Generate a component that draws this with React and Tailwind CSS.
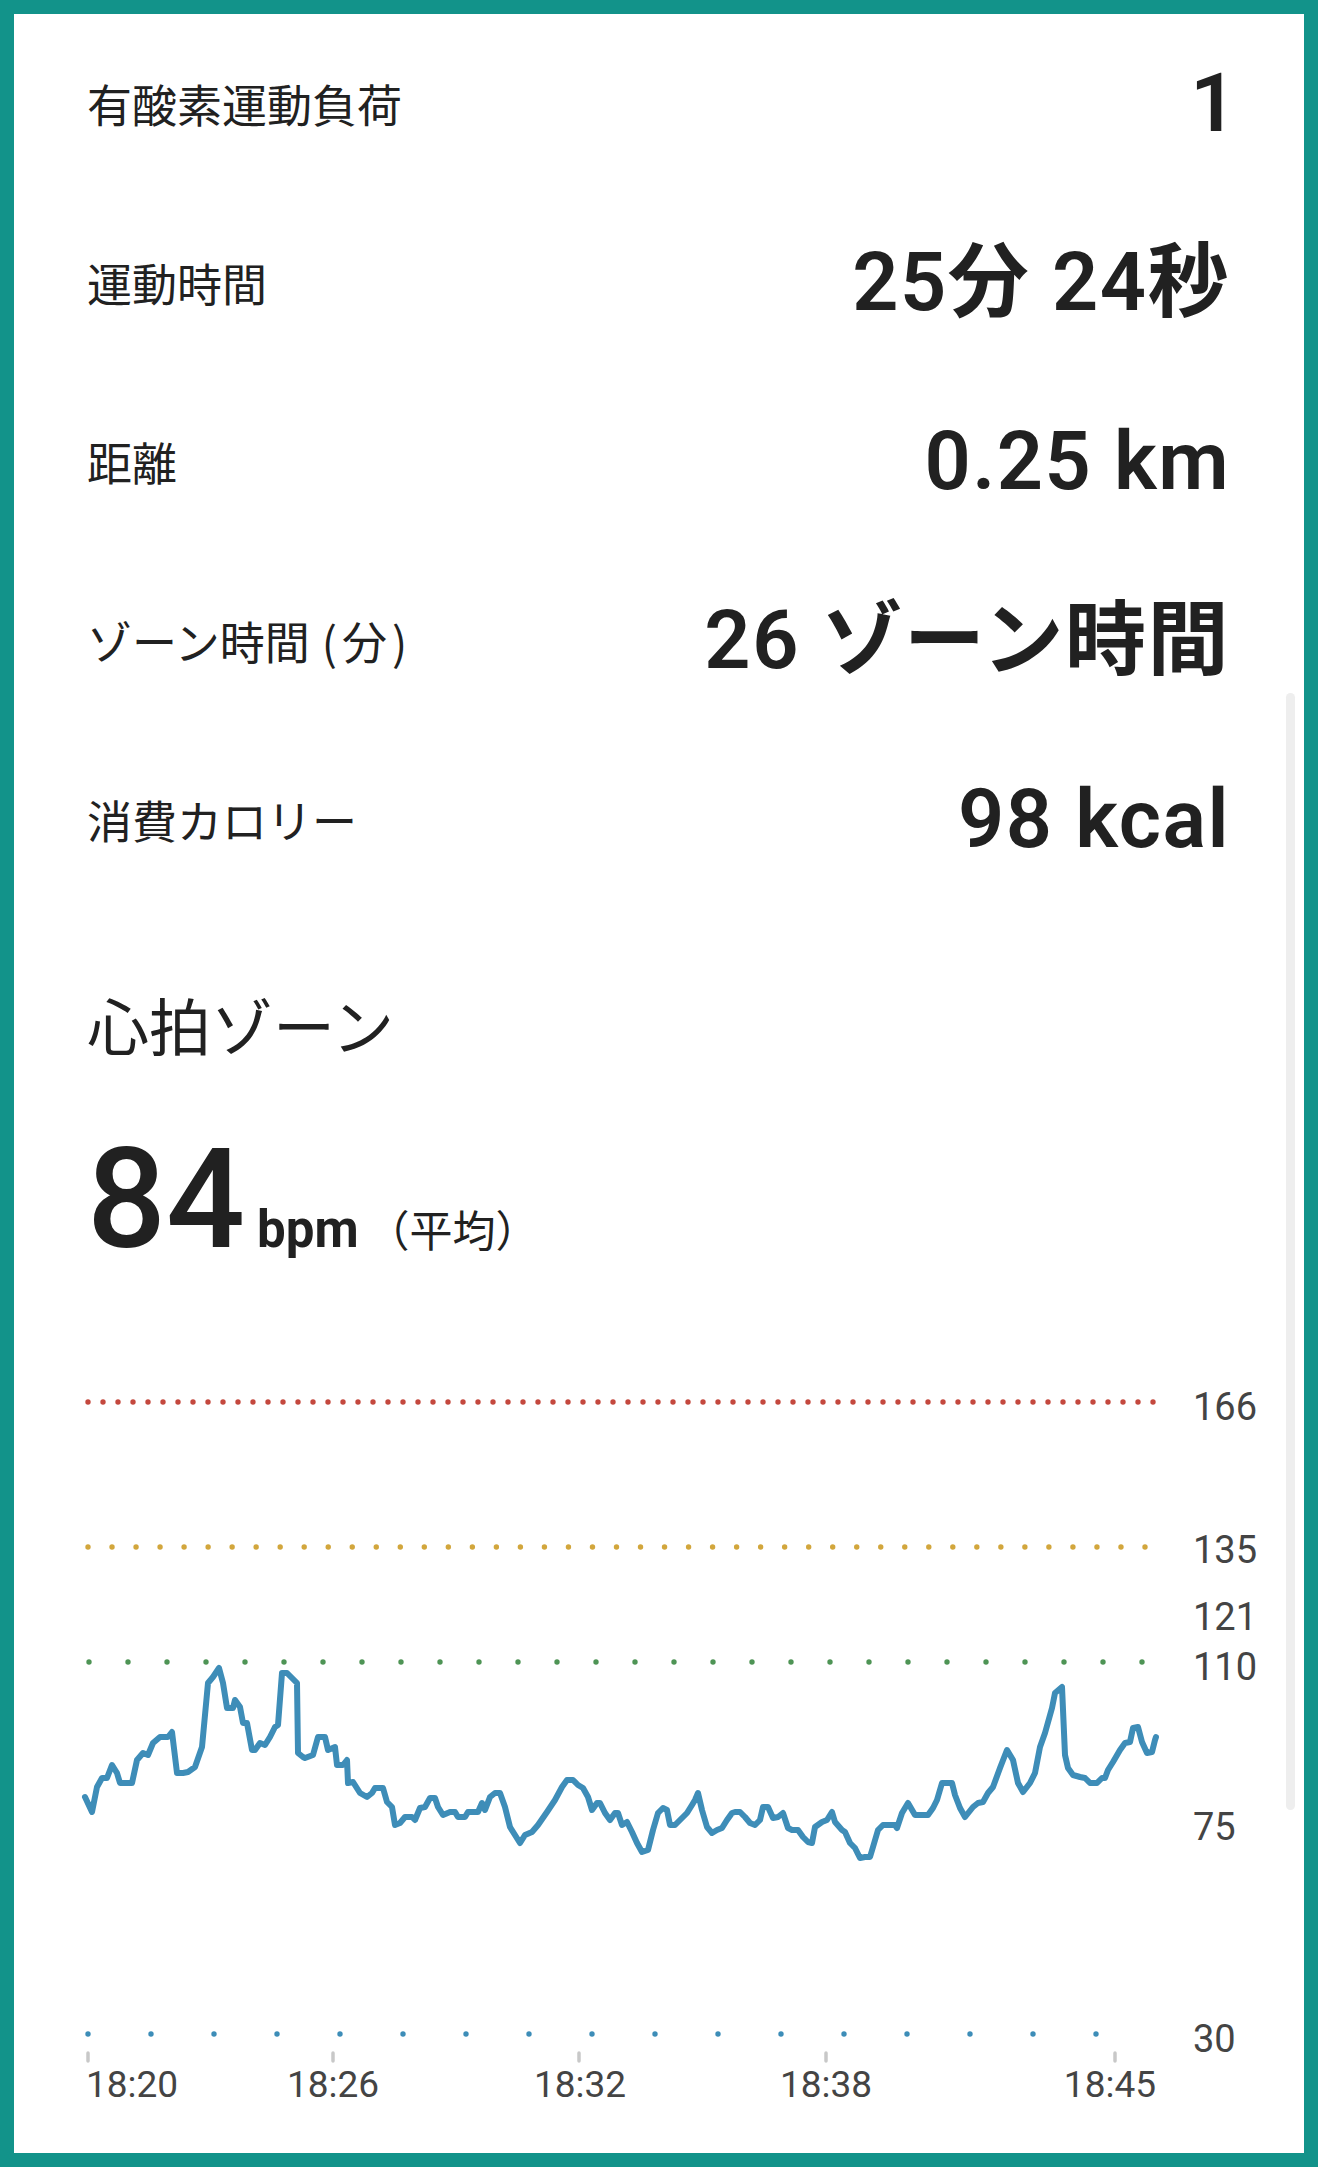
import React from 'react';

const rows = [
  { label: '有酸素運動負荷', value: '1', nudge: 'mr-[-8px]' },
  { label: '運動時間', value: '25分 24秒' },
  { label: '距離', value: '0.25 km' },
  { label: 'ゾーン時間 (分)', value: '26 ゾーン時間' },
  { label: '消費カロリー', value: '98 kcal' },
];

// heart rate trace, page coordinates
const trace = `85,1797 92,1812 97,1787 102,1778 107,1778 112,1765 117,1773 120,1783 132,1783 137,1760 143,1753 148,1755 153,1743 160,1737 168,1737 172,1732 177,1773 183,1773 188,1772 195,1767 202,1747 208,1683 213,1677 219,1668 223,1683 227,1708 233,1708 235,1700 240,1707 243,1723 247,1723 252,1750 255,1750 260,1743 265,1745 270,1737 275,1727 278,1725 282,1673 287,1673 292,1678 297,1683 298,1753 303,1757 305,1758 313,1755 318,1737 325,1737 328,1750 335,1747 337,1765 343,1765 347,1760 348,1783 353,1782 360,1793 367,1797 372,1793 375,1788 383,1788 387,1802 392,1807 395,1825 400,1823 405,1817 412,1817 415,1820 420,1808 425,1807 430,1798 435,1798 438,1807 443,1815 450,1812 455,1812 458,1817 465,1817 468,1812 478,1812 482,1803 485,1810 490,1797 495,1793 500,1793 505,1807 510,1827 515,1835 520,1843 525,1835 532,1832 538,1825 547,1812 555,1800 562,1787 567,1780 573,1780 578,1785 583,1788 588,1797 592,1810 597,1803 600,1803 605,1813 610,1820 615,1813 618,1813 622,1825 627,1822 632,1832 637,1843 642,1852 648,1850 653,1830 658,1813 663,1808 667,1810 670,1825 675,1825 680,1820 687,1813 692,1805 695,1800 698,1793 702,1810 707,1827 712,1833 717,1830 722,1828 727,1820 732,1813 735,1812 740,1812 745,1817 750,1823 755,1825 760,1820 763,1807 768,1807 773,1818 778,1817 783,1813 788,1828 792,1830 798,1830 803,1837 808,1842 812,1843 815,1827 822,1822 827,1820 832,1812 835,1822 842,1830 845,1832 850,1843 855,1848 860,1858 865,1857 870,1857 873,1847 878,1830 883,1825 895,1825 897,1828 902,1813 908,1803 915,1815 928,1815 933,1808 937,1800 942,1783 952,1783 955,1795 960,1808 965,1817 973,1807 978,1803 983,1802 988,1793 993,1787 1000,1768 1007,1750 1013,1760 1018,1783 1023,1792 1030,1783 1035,1773 1040,1747 1045,1733 1052,1708 1055,1693 1062,1687 1065,1755 1068,1768 1073,1775 1080,1777 1085,1778 1090,1783 1097,1783 1102,1778 1105,1778 1108,1770 1113,1762 1120,1750 1125,1743 1130,1742 1133,1728 1138,1727 1142,1742 1147,1753 1152,1752 1155,1740 1156,1737`;

const dots = (from, to, count) =>
  Array.from({ length: count }, (_, i) => from + ((to - from) * i) / (count - 1));

const zones = [
  { y: 1402, xs: dots(88, 1153, 72), color: '#c4483e' },
  { y: 1547, xs: dots(88, 1145, 45), color: '#d2a63c' },
  { y: 1662, xs: dots(89, 1142, 28), color: '#4e9455' },
  { y: 2034, xs: dots(88, 1096, 17), color: '#3d8db8' },
];

const yLabels = [
  { t: '166', y: 1420 },
  { t: '135', y: 1563 },
  { t: '121', y: 1630 },
  { t: '110', y: 1680 },
  { t: '75', y: 1840 },
  { t: '30', y: 2052 },
];

const xLabels = [
  { t: '18:20', x: 86, tick: 88, anchor: 'start' },
  { t: '18:26', x: 333, tick: 333, anchor: 'middle' },
  { t: '18:32', x: 580, tick: 579, anchor: 'middle' },
  { t: '18:38', x: 826, tick: 826, anchor: 'middle' },
  { t: '18:45', x: 1156, tick: 1115, anchor: 'end' },
];

const HeartChart = () => (
  <svg
    width="1290"
    height="773"
    viewBox="14 1380 1290 773"
    className="block mt-auto shrink-0"
    style={{ fontFamily: 'Roboto, "Liberation Sans", sans-serif' }}
  >
    {zones.map((z) =>
      z.xs.map((x, i) => <circle key={`${z.y}-${i}`} cx={x} cy={z.y} r="2.7" fill={z.color} />)
    )}
    <polyline
      points={trace}
      fill="none"
      stroke="#3e8db8"
      strokeWidth="6"
      strokeLinejoin="round"
      strokeLinecap="round"
    />
    {yLabels.map((l) => (
      <text key={l.t} x="1193" y={l.y} fontSize="38" fill="#444444">
        {l.t}
      </text>
    ))}
    {xLabels.map((l) => (
      <g key={l.t}>
        <line x1={l.tick} y1="2053" x2={l.tick} y2="2061" stroke="#c8c8c8" strokeWidth="3.5" strokeLinecap="round" />
        <text x={l.x} y="2097" fontSize="37" fill="#444444" textAnchor={l.anchor}>
          {l.t}
        </text>
      </g>
    ))}
  </svg>
);

const Label = ({ text }) => {
  // the paren part of "ゾーン時間 (分)" is set a little looser
  const m = text.match(/^(.*) \((.*)\)$/);
  if (!m) return text;
  return (
    <>
      {m[1]}
      <span className="ml-[12px]">(</span>
      <span className="mx-[5px]">{m[2]}</span>
      <span>)</span>
    </>
  );
};

const App = () => {
  return (
    <div className="w-[1318px] h-[2167px] bg-[#12938a] p-[14px]">
      <div className="relative h-full bg-white flex flex-col text-[#212121]">
        {/* overlay scrollbar */}
        <div className="absolute right-[9px] top-[679px] w-[9px] h-[1117px] rounded-full bg-[#eeeeee]" />

        {/* Summary rows */}
        <div className="pl-[73px] pr-[74px]">
          {rows.map((row) => (
            <div key={row.label} className="h-[179px] flex items-center justify-between">
              <span className="text-[45px] leading-none font-['Noto_Sans_CJK_JP',sans-serif]">
                <Label text={row.label} />
              </span>
              <span
                className={`text-[81px] leading-none font-semibold tracking-[1.5px] font-['Roboto','Noto_Sans_CJK_JP',sans-serif] ${
                  row.nudge || ''
                }`}
              >
                {row.value}
              </span>
            </div>
          ))}
        </div>

        {/* Heart rate zone */}
        <div className="pl-[73px]">
          <h2 className="mt-[84px] text-[62px] leading-[62px] font-normal font-['Noto_Sans_CJK_JP',sans-serif]">
            心拍ゾーン
          </h2>
          <div className="mt-[75px] flex items-baseline leading-none">
            <span className="text-[139px] font-medium font-['Roboto',sans-serif]">84</span>
            <span className="ml-[12px] text-[51px] font-bold font-['Roboto',sans-serif]">bpm</span>
            <span className="ml-[8px] text-[43px] font-['Noto_Sans_CJK_JP',sans-serif]">（平均）</span>
          </div>
        </div>

        <HeartChart />
      </div>
    </div>
  );
};

export default App;
